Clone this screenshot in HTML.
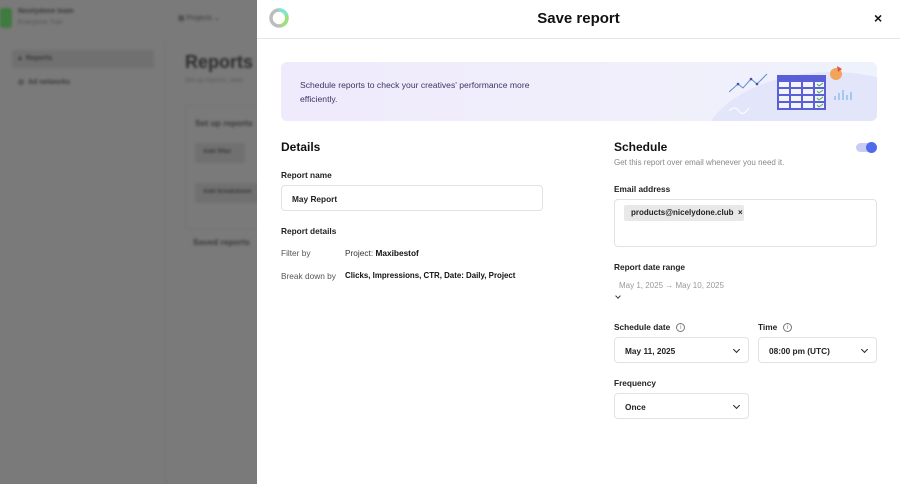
<!DOCTYPE html>
<html><head><meta charset="utf-8"><style>
*{box-sizing:border-box;margin:0;padding:0}
body{width:900px;height:484px;overflow:hidden;position:relative;font-family:"Liberation Sans",sans-serif;background:#7a7a7a}
.ov{position:absolute;left:0;top:0;width:257px;height:484px;background:#7a7a7a}
.bg{position:absolute;inset:0;filter:blur(1.2px);color:#3a3a3a}
.bg div{position:absolute}
.panel{position:absolute;left:257px;top:0;width:643px;height:484px;background:#fff}
.p{position:absolute}
.lbl{font-size:8.3px;font-weight:bold;color:#222}
.inp{position:absolute;border:1px solid #e2e2e2;border-radius:4px;background:#fff;font-size:8.3px;color:#222;font-weight:bold;white-space:nowrap}
.chev{position:absolute;right:9px;top:9px;width:5px;height:5px;border-right:1.5px solid #222;border-bottom:1.5px solid #222;transform:rotate(45deg)}
.info{display:inline-block;width:9px;height:9px;border:1px solid #777;border-radius:50%;font-size:6px;text-align:center;line-height:8px;color:#777;margin-left:6px;font-weight:normal;vertical-align:middle}
</style></head><body>
<div class="ov"></div>
<div class="bg">
 <div style="left:0;top:8px;width:12px;height:20px;background:#3f7a3f;border-radius:3px"></div>
 <div style="left:18px;top:8px;font-size:7px;font-weight:bold">Nicelydone team</div>
 <div style="left:18px;top:19px;font-size:6.5px;color:#555">Enterprise Trial</div>
 <div style="left:178px;top:14px;font-size:7px">▦ Projects ⌄</div>
 <div style="left:12px;top:50px;width:142px;height:18px;background:#707070;border-radius:3px"></div>
 <div style="left:18px;top:55px;font-size:7px;font-weight:bold">⩓ &nbsp;Reports</div>
 <div style="left:18px;top:78px;font-size:7px;font-weight:bold">◎ &nbsp;Ad networks</div>
 <div style="left:165px;top:40px;width:1px;height:444px;background:#727272"></div>
 <div style="left:185px;top:52px;font-size:18px;font-weight:bold;color:#2e2e2e">Reports</div>
 <div style="left:185px;top:77px;font-size:6.5px;color:#5a5a5a">Set up reports, save</div>
 <div style="left:185px;top:105px;width:80px;height:125px;border:1px solid #727272;border-radius:4px"></div>
 <div style="left:195px;top:118px;font-size:8.5px;font-weight:bold">Set up reports</div>
 <div style="left:195px;top:143px;width:50px;height:20px;background:#707070;border-radius:3px;font-size:6.5px;padding:5px 8px;font-weight:bold">Add filter</div>
 <div style="left:195px;top:183px;width:70px;height:20px;background:#707070;border-radius:3px;font-size:6.5px;padding:5px 8px;font-weight:bold">Add breakdown</div>
 <div style="left:193px;top:237px;font-size:8.5px;font-weight:bold">Saved reports</div>
</div>
<div class="panel">
 <svg class="p" style="left:10px;top:6px" width="24" height="24" viewBox="0 0 24 24"><circle cx="12" cy="12" r="8" fill="none" stroke="#bdbdbd" stroke-width="3.5"/><path d="M12 4A8 8 0 0 1 14 19.7" fill="none" stroke="#9be27a" stroke-width="3.5"/><path d="M12 4A8 8 0 0 1 19.5 9" fill="none" stroke="#7fe6d6" stroke-width="3.5"/></svg>
 <div class="p" style="left:0;width:643px;top:10px;text-align:center;font-size:15px;font-weight:bold;color:#111">Save report</div>
 <div class="p" style="left:617px;top:10px;font-size:14px;font-weight:bold;color:#111">×</div>
 <div class="p" style="left:0;top:38px;width:643px;height:1px;background:#e6e6e6"></div>
 <div class="p" style="left:24px;top:62px;width:596px;height:59px;border-radius:6px;background:linear-gradient(90deg,#efeafc,#f0effb 60%,#eef2fc);overflow:hidden">
  <div class="p" style="left:19px;top:17px;font-size:8.6px;color:#3f3464;line-height:13.5px;width:245px">Schedule reports to check your creatives' performance more efficiently.</div>
  <div class="p" style="left:420px;top:10px;width:260px;height:160px;border-radius:50%;background:#e3e6fa"></div>
  <svg class="p" style="left:448px;top:0" width="148" height="59" viewBox="0 0 148 59">
   <polyline points="0,30 9,22 14,26 22,17 28,22 38,12" fill="none" stroke="#5a8ed8" stroke-width="1"/>
   <circle cx="9" cy="22" r="1.3" fill="#4a4f9a"/><circle cx="22" cy="17" r="1.3" fill="#4a4f9a"/><circle cx="28" cy="22" r="1.3" fill="#4a4f9a"/>
   <rect x="48" y="13" width="49" height="35" fill="#5a5fd8"/>
   <g fill="#f3f3fb"><rect x="50" y="20" width="10" height="5"/><rect x="62" y="20" width="10" height="5"/><rect x="74" y="20" width="10" height="5"/><rect x="86" y="20" width="9" height="5"/><rect x="50" y="27" width="10" height="5"/><rect x="62" y="27" width="10" height="5"/><rect x="74" y="27" width="10" height="5"/><rect x="86" y="27" width="9" height="5"/><rect x="50" y="34" width="10" height="5"/><rect x="62" y="34" width="10" height="5"/><rect x="74" y="34" width="10" height="5"/><rect x="86" y="34" width="9" height="5"/><rect x="50" y="41" width="10" height="5"/><rect x="62" y="41" width="10" height="5"/><rect x="74" y="41" width="10" height="5"/><rect x="86" y="41" width="9" height="5"/></g>
   <g stroke="#3fa84a" stroke-width="0.9" fill="none"><path d="M88 22l2 2 4-3"/><path d="M88 29l2 2 4-3"/><path d="M88 36l2 2 4-3"/><path d="M88 43l2 2 4-3"/></g>
   <circle cx="107" cy="12" r="6" fill="#f2a35c"/><path d="M108 4l5 3-4 3z" fill="#e0573a"/>
   <g stroke="#7ab6e8" stroke-width="1.2"><line x1="106" y1="38" x2="106" y2="34"/><line x1="110" y1="38" x2="110" y2="31"/><line x1="114" y1="38" x2="114" y2="28"/><line x1="118" y1="38" x2="118" y2="33"/><line x1="122" y1="38" x2="122" y2="30"/></g>
   <path d="M0 49q6-6 10 0q4 6 10-3" fill="none" stroke="#fff" stroke-width="1"/>
  </svg>
 </div>
 <div class="p" style="left:24px;top:140px;font-size:12px;font-weight:bold;color:#111">Details</div>
 <div class="p lbl" style="left:24px;top:170px">Report name</div>
 <div class="inp" style="left:24px;top:185px;width:262px;height:26px;padding:8px 10px">May Report</div>
 <div class="p lbl" style="left:24px;top:226px">Report details</div>
 <div class="p" style="left:24px;top:248px;font-size:8.3px;color:#555">Filter by</div>
 <div class="p" style="left:88px;top:248px;font-size:8.3px;color:#333">Project: <b style="color:#111">Maxibestof</b></div>
 <div class="p" style="left:24px;top:271px;font-size:8.3px;color:#555">Break down by</div>
 <div class="p" style="left:88px;top:271px;font-size:7.9px;color:#111;font-weight:bold">Clicks, Impressions, CTR, Date: Daily, Project</div>

 <div class="p" style="left:357px;top:140px;font-size:12px;font-weight:bold;color:#111">Schedule</div>
 <div class="p" style="left:357px;top:158px;font-size:8px;color:#888">Get this report over email whenever you need it.</div>
 <div class="p" style="left:599px;top:143px;width:20px;height:9px;border-radius:5px;background:#c9cdf4"></div>
 <div class="p" style="left:609px;top:142px;width:11px;height:11px;border-radius:50%;background:#4f6bea"></div>
 <div class="p lbl" style="left:357px;top:184px">Email address</div>
 <div class="inp" style="left:357px;top:199px;width:263px;height:48px"></div>
 <div class="p" style="left:367px;top:205px;width:120px;height:16px;background:#e8e8e8;border-radius:2px;font-size:8px;font-weight:bold;color:#222;padding:3px 7px;white-space:nowrap">products@nicelydone.club &nbsp;<span style="font-size:8px">×</span></div>
 <div class="p lbl" style="left:357px;top:262px">Report date range</div>
 <div class="p" style="left:362px;top:281px;font-size:8px;color:#999">May 1, 2025 → May 10, 2025</div>
 <div class="p" style="left:359px;top:294px;width:4px;height:4px;border-right:1px solid #444;border-bottom:1px solid #444;transform:rotate(45deg)"></div>
 <div class="p lbl" style="left:357px;top:322px">Schedule date<span class="info">i</span></div>
 <div class="inp" style="left:357px;top:337px;width:135px;height:26px;padding:8px 10px">May 11, 2025<div class="chev"></div></div>
 <div class="p lbl" style="left:501px;top:322px">Time<span class="info">i</span></div>
 <div class="inp" style="left:501px;top:337px;width:119px;height:26px;padding:8px 10px">08:00 pm (UTC)<div class="chev"></div></div>
 <div class="p lbl" style="left:357px;top:378px">Frequency</div>
 <div class="inp" style="left:357px;top:393px;width:135px;height:26px;padding:8px 10px">Once<div class="chev"></div></div>
</div>
</body></html>
